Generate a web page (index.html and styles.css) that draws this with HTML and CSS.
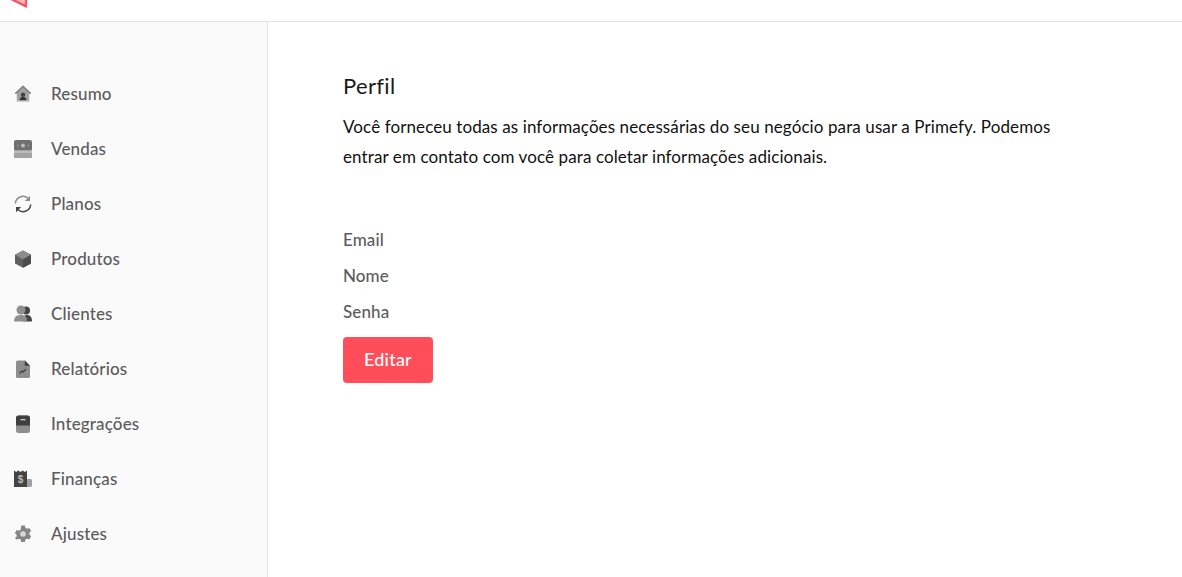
FILE: index.html
```html
<!DOCTYPE html>
<html lang="pt">
<head>
<meta charset="utf-8">
<title>Perfil</title>
<link rel="stylesheet" href="styles.css">
</head>
<body>
<header class="topbar">
  <svg class="logo" width="30" height="8" viewBox="0 0 30 8"><path d="M11 -1 L25.800 6.200 L26.300 -1z" fill="#ffb3ba" stroke="#ff4d5a" stroke-width="2.200"/></svg>
</header>
<div class="layout">
  <nav class="sidebar">
    <a class="item"><svg class="icon" viewBox="0 0 18 18"><path d="M9 .5 1 8v.8h1.800V17h12.400V8.800H17V8z" fill="#a2a2a2"/><path d="M9 .5 1 8v.8h1.200L9 2.600l6.800 6.200H17V8z" fill="#808080"/><circle cx="9" cy="9.800" r="2.200" fill="#444"/><path d="M5.500 15.500c0-2.500 1.500-3.500 3.500-3.500s3.500 1 3.500 3.500z" fill="#333"/><rect x="2.800" y="15.500" width="12.400" height="1.500" fill="#cfcfcf"/></svg><span>Resumo</span></a>
    <a class="item"><svg class="icon" viewBox="0 0 18 18"><rect y="0" width="18" height="11" rx="2" fill="#707070"/><rect y="10" width="18" height="8.500" rx="2" fill="#a3a3a3"/><rect y="11" width="18" height="2" fill="#bbb"/><circle cx="9" cy="5.500" r="2" fill="#bdbdbd"/><circle cx="4" cy="5.500" r=".8" fill="#aaa"/><circle cx="14" cy="5.500" r=".8" fill="#aaa"/></svg><span>Vendas</span></a>
    <a class="item"><svg class="icon" viewBox="0 0 18 18"><path d="M1.300 8.500A7.700 7.700 0 0 1 14 3.200" fill="none" stroke="#8c8c8c" stroke-width="1.500"/><path d="M16 .8v5.200H10.800z" fill="#8c8c8c"/><path d="M16.700 9.500A7.700 7.700 0 0 1 4 14.800" fill="none" stroke="#444" stroke-width="1.500"/><path d="M2 17.200V12H7.200z" fill="#444"/></svg><span>Planos</span></a>
    <a class="item"><svg class="icon" viewBox="0 0 18 18"><path d="M9 .5 1 4.800v8.700L9 17.800l8-4.300V4.800z" fill="#5f5f5f"/><path d="M9 .5 1 4.800l8 4.700 8-4.700z" fill="#8b8b8b"/><path d="M9 9.500v8.300l8-4.300V4.800z" fill="#4c4c4c"/></svg><span>Produtos</span></a>
    <a class="item"><svg class="icon" viewBox="0 0 18 18"><circle cx="12" cy="5.500" r="4" fill="#444"/><path d="M9 16.500c0-4.500 1-6.500 4-6.500s5 2 5 6.500z" fill="#444"/><circle cx="7" cy="5" r="4.500" fill="#8f8f8f"/><path d="M0 16.500c0-4.500 2.500-6.500 7-6.500s6 2 6 6.500z" fill="#8f8f8f"/></svg><span>Clientes</span></a>
    <a class="item"><svg class="icon" viewBox="0 0 18 18"><path d="M2 2A1.500 1.500 0 0 1 3.500.5H11L16 5.500V16.500A1.500 1.500 0 0 1 14.500 18h-11A1.500 1.500 0 0 1 2 16.500z" fill="#8d8d8d"/><path d="M10.800.5V5.800H16z" fill="#3f3f3f"/><path d="M5.500 13.500l2.500-2.500 1.200 1L12 9" fill="none" stroke="#444" stroke-width="1.300"/></svg><span>Relatórios</span></a>
    <a class="item"><svg class="icon" viewBox="0 0 18 18"><rect x="2" y=".5" width="14" height="17.500" rx="2.500" fill="#8f8f8f"/><path d="M2 10.500V3A2.500 2.500 0 0 1 4.500.5h9A2.500 2.500 0 0 1 16 3v7.500z" fill="#3f3f3f"/><rect x="6.500" y="4" width="5" height="1.300" fill="#ccc"/></svg><span>Integrações</span></a>
    <a class="item"><svg class="icon" viewBox="0 0 18 18"><path d="M0 .5l2.200 1.500L4.300.5l2.200 1.500L8.700.5l2.100 1.500L13 .5V17H0z" fill="#444"/><path d="M13 9h3.500A1.500 1.500 0 0 1 18 10.500V15.500A1.500 1.500 0 0 1 16.500 17H13z" fill="#a0a0a0"/><text class="dollar" x="6.500" y="13" text-anchor="middle">$</text></svg><span>Finanças</span></a>
    <a class="item"><svg class="icon" viewBox="0 0 18 18"><path d="M7.200.5h3.600l.6 2.300 1.600.9 2.300-.7 1.800 3.100-1.700 1.700v1.800l1.700 1.700-1.800 3.100-2.300-.7-1.600.9-.6 2.300H7.200l-.6-2.300-1.600-.9-2.300.7L.9 13.300l1.700-1.700V9.800L.9 8.100l1.800-3.100 2.300.7 1.600-.9z" fill="#858585"/><circle cx="9" cy="9" r="2.800" fill="#d8d8d8"/></svg><span>Ajustes</span></a>
  </nav>
  <main class="content">
    <h1 class="title">Perfil</h1>
    <p class="intro">Você forneceu todas as informações necessárias do seu negócio para usar a Primefy. Podemos entrar em contato com você para coletar informações adicionais.</p>
    <ul class="fields">
      <li>Email</li>
      <li>Nome</li>
      <li>Senha</li>
    </ul>
    <button class="btn" type="button">Editar</button>
  </main>
</div>
</body>
</html>
```
FILE: styles.css
```css
* { box-sizing: border-box; }
html, body { height: 100%; }
body {
  margin: 0;
  overflow: hidden;
  background: #fff;
  font-family: "Lato", "Open Sans", sans-serif;
  display: flex;
  flex-direction: column;
}
.topbar {
  height: 22px;
  flex: none;
  border-bottom: 1px solid #e3e3e3;
  overflow: hidden;
}
.logo { display: block; }
.layout { flex: 1; display: flex; min-height: 0; }
.sidebar {
  width: 268px;
  flex: none;
  background: #fafafa;
  border-right: 1px solid #e3e3e3;
  padding-top: 44px;
}
.item {
  display: flex;
  align-items: center;
  height: 55px;
  padding-left: 14px;
  color: #5c5c5c;
  font-size: 17px;
  font-weight: 500;
  letter-spacing: 0.15px;
}
.icon { width: 18px; height: 18px; margin-right: 19px; flex: none; }
.dollar { font-size: 10px; font-weight: 700; fill: #bbb; font-family: "Liberation Sans", sans-serif; letter-spacing: 0; }
.content { flex: 1; padding: 51px 0 0 75px; }
.title {
  margin: 0;
  font-size: 22px;
  line-height: 26px;
  font-weight: 400;
  letter-spacing: 0.35px;
  color: #1a1a1a;
}
.intro {
  margin: 13px 0 0;
  width: 730px;
  font-size: 17px;
  line-height: 30px;
  letter-spacing: 0.1px;
  color: #111;
}
.fields {
  list-style: none;
  margin: 50px 0 0;
  padding: 0;
  color: #5c5c5c;
  font-size: 17px;
  font-weight: 500;
  letter-spacing: 0.1px;
}
.fields li { height: 36px; line-height: 36px; }
.btn {
  display: block;
  margin-top: 7px;
  padding: 0 0 2px;
  width: 90px;
  height: 46px;
  border: 0;
  border-radius: 4px;
  background: #ff4d5a;
  color: #fff;
  font: 500 18px "Lato", sans-serif;
  letter-spacing: 0.2px;
}
```
